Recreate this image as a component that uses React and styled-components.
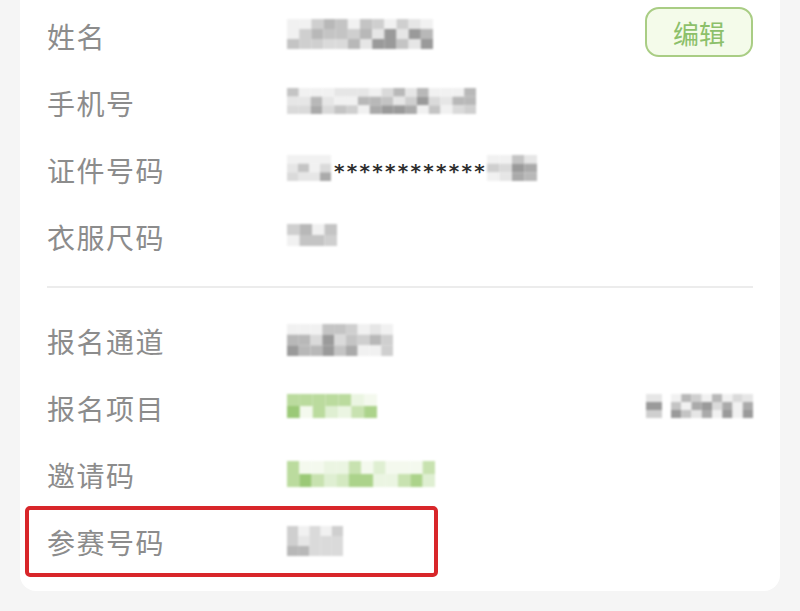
import React from "react";
import styled, { createGlobalStyle } from "styled-components";

const Global = createGlobalStyle`
  html, body { margin: 0; padding: 0; background: #f5f5f5; }
  body { font-family: "Noto Sans CJK SC", "Noto Sans", sans-serif; overflow: hidden; }
`;

const Page = styled.div`
  width: 800px;
  height: 611px;
  overflow: hidden;
  background: #f5f5f5;
`;

const Card = styled.div`
  margin: -20px 0 0 20px;
  width: 760px;
  box-sizing: border-box;
  padding: 22px 27px 16px 27px;
  background: #fff;
  border-radius: 16px;
`;

const Row = styled.div`
  position: relative;
  display: flex;
  align-items: center;
  height: 67px;
`;

const Label = styled.div`
  width: 240px;
  flex: none;
  font-size: 28px;
  color: #8c8c8c;
  letter-spacing: 1.5px;
`;

const Value = styled.div`
  flex: 1;
  display: flex;
  align-items: center;
  margin-top: ${(p) => p.$dy || 0}px;
`;

const Stars = styled.span`
  font-family: "DejaVu Sans", sans-serif;
  font-size: 20px;
  font-weight: bold;
  color: #2e2e2e;
  letter-spacing: 2.3px;
  margin: 0 0 0 3px;
  line-height: 1;
  padding-top: 5px;
`;

const EditButton = styled.button`
  flex: none;
  width: 108px;
  height: 50px;
  margin-bottom: 7px;
  border: 2px solid #a9cd84;
  border-radius: 14px;
  background: #f4fbea;
  color: #8cc06a;
  font-family: "Noto Sans CJK SC", sans-serif;
  font-size: 26px;
  padding: 0;
  box-sizing: border-box;
`;

const Divider = styled.div`
  height: 2px;
  background: #ececec;
  margin: 16px 0 19px;
`;

const Highlight = styled.div`
  position: absolute;
  left: -22px;
  top: -2px;
  width: 413px;
  height: 71px;
  box-sizing: border-box;
  border: 4px solid #d8262a;
  border-radius: 5px;
  pointer-events: none;
`;

const MosaicSvg = styled.svg`
  display: block;
  filter: blur(1.3px);
  flex: none;
`;

function rand(seed) {
  let s = seed;
  return () => {
    s = (s * 9301 + 49297) % 233280;
    return s / 233280;
  };
}

const grays = ["#9a9a9a", "#aaaaaa", "#b8b8b8", "#c4c4c4", "#cfcfcf", "#dadada", "#e6e6e6", "#f1f1f1"];
const greens = ["#9bc977", "#acd38b", "#bbdb9e", "#c8e2b0", "#d4e9c1", "#dfefd2", "#ebf5e2", "#f4f9ee"];

function Mosaic({ seed, cols, rows = 3, green, w, h }) {
  const r = rand(seed);
  const pal = green ? greens : grays;
  const rects = [];
  for (let y = 0; y < rows; y++) {
    for (let x = 0; x < cols; x++) {
      const v = r();
      let idx = Math.floor(v * pal.length);
      if (y === 0) idx = Math.min(pal.length - 1, idx + 2);
      rects.push(<rect key={x + "_" + y} x={x} y={y} width={1} height={1} fill={pal[idx]} />);
    }
  }
  return (
    <MosaicSvg width={w} height={h} viewBox={`0 0 ${cols} ${rows}`} preserveAspectRatio="none">
      {rects}
    </MosaicSvg>
  );
}

const Spacer = styled.div`
  flex: 1;
`;

const Gap = styled.div`
  width: ${(p) => p.$w}px;
  flex: none;
`;

export default function App() {
  return (
    <Page>
      <Global />
      <Card>
        <Row>
          <Label>姓名</Label>
          <Value $dy={-4}>
            <Mosaic seed={11} cols={12} w={146} h={30} />
          </Value>
          <EditButton>编辑</EditButton>
        </Row>
        <Row>
          <Label>手机号</Label>
          <Value $dy={-4}>
            <Mosaic seed={23} cols={16} w={189} h={26} />
          </Value>
        </Row>
        <Row>
          <Label>证件号码</Label>
          <Value $dy={-3}>
            <Mosaic seed={37} cols={4} w={44} h={26} />
            <Stars>************</Stars>
            <Mosaic seed={41} cols={4} w={50} h={26} />
          </Value>
        </Row>
        <Row>
          <Label>衣服尺码</Label>
          <Value $dy={-3}>
            <Mosaic seed={53} cols={4} rows={2} w={50} h={22} />
          </Value>
        </Row>
        <Divider />
        <Row>
          <Label>报名通道</Label>
          <Value $dy={-2}>
            <Mosaic seed={67} cols={9} rows={3} w={106} h={32} />
          </Value>
        </Row>
        <Row>
          <Label>报名项目</Label>
          <Value $dy={-3}>
            <Mosaic seed={71} cols={7} rows={2} green w={90} h={24} />
            <Spacer />
            <Mosaic seed={83} cols={1} w={16} h={24} />
            <Gap $w={9} />
            <Mosaic seed={89} cols={8} w={82} h={24} />
          </Value>
        </Row>
        <Row>
          <Label>邀请码</Label>
          <Value $dy={-2}>
            <Mosaic seed={97} cols={12} rows={2} green w={148} h={26} />
          </Value>
        </Row>
        <Row>
          <Label>参赛号码</Label>
          <Value $dy={-1}>
            <Mosaic seed={103} cols={5} rows={3} w={56} h={30} />
          </Value>
          <Highlight />
        </Row>
      </Card>
    </Page>
  );
}
